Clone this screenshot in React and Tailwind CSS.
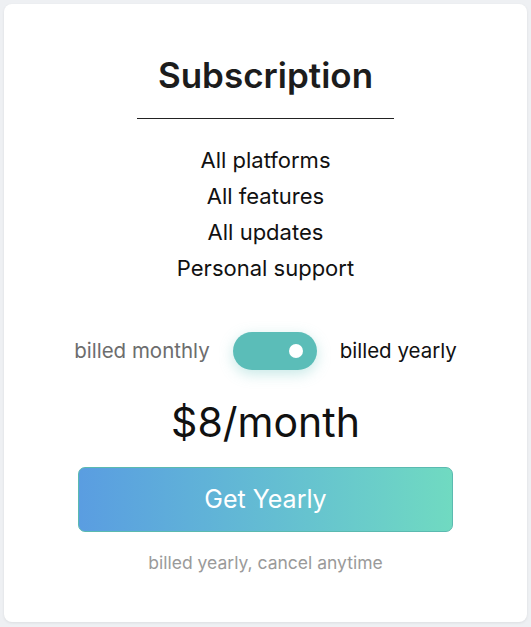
import React, { useState } from "react";

export default function App() {
  const [yearly, setYearly] = useState(true);
  return (
    <div className="min-h-screen bg-[#eef0f3] p-[4px] font-['Inter','Noto_Sans',sans-serif]">
      <div className="h-[618px] bg-white rounded-lg shadow-[0_1px_3px_rgba(0,0,0,0.08)] flex flex-col items-center pt-[49px]">
        <h1 className="text-[35px] font-semibold text-[#1c1c1c] leading-[44px]">Subscription</h1>
        <div className="w-[257px] h-px bg-[#222] mt-[21px]" />
        <ul className="mt-[23px] text-center text-[22px] leading-[36px] text-[#111]">
          <li>All platforms</li>
          <li>All features</li>
          <li>All updates</li>
          <li>Personal support</li>
        </ul>

        {/* billing toggle */}
        <div className="mt-[46px] flex items-center gap-[23px] text-[20.5px]">
          <span className="text-[#6d6d6d]">billed monthly</span>
          <button
            onClick={() => setYearly(!yearly)}
            className="w-[84px] h-[38px] rounded-full bg-[#5bbdb8] shadow-[0_4px_14px_rgba(91,189,184,0.35)] flex items-center px-[14px]"
          >
            <span className={`w-[14px] h-[14px] rounded-full bg-white ${yearly ? "ml-auto" : ""}`} />
          </button>
          <span className="text-[#111]">billed yearly</span>
        </div>

        <div className="mt-[27px] text-[41px] leading-[50px] text-[#111]">$8/month</div>

        <button className="mt-[20px] w-[375px] h-[65px] rounded-[7px] border border-[#5bbab0] bg-gradient-to-r from-[#5a9de1] to-[#70dac1] text-white text-[25px]">
          Get Yearly
        </button>

        <p className="mt-[18px] text-[17.5px] text-[#9a9a9a]">billed yearly, cancel anytime</p>
      </div>
    </div>
  );
}
